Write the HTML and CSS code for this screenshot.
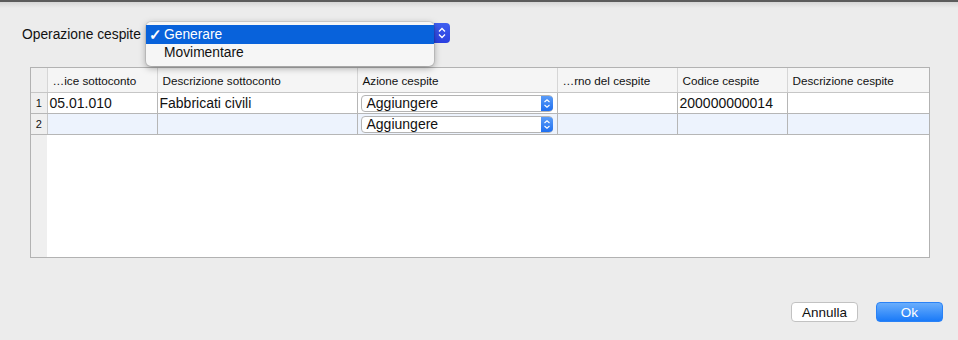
FILE: index.html
```html
<!DOCTYPE html>
<html lang="it">
  <head>
    <meta charset="UTF-8" />
    <meta name="viewport" content="width=device-width, initial-scale=1.0" />
    <title>Operazione cespite</title>
    <link rel="stylesheet" href="styles.css">
  </head>
  <body>
    <div class="topEdge"></div>
    <div class="dialog">
      <div class="fieldRow">
        <label class="fieldLabel">Operazione cespite</label>
        <div class="popupWrap">
          <div class="popupButton">
            <span class="stepper big">
              <svg width="16" height="20" viewBox="0 0 16 20"><path d="M5 8.5 L8 5.5 L11 8.5 M5 11.5 L8 14.5 L11 11.5" fill="none" stroke="#fff" stroke-width="1.3"/></svg>
            </span>
          </div>
          <ul class="popupMenu">
            <li class="selected"><span class="check">✓</span>Generare</li>
            <li>Movimentare</li>
          </ul>
        </div>
      </div>

      <div class="grid">
        <table class="gridTable">
          <colgroup>
            <col class="colNum">
            <col class="colA">
            <col class="colB">
            <col class="colC">
            <col class="colD">
            <col class="colE">
            <col>
          </colgroup>
          <thead>
            <tr>
              <th class="num"></th>
              <th>…ice sottoconto</th>
              <th>Descrizione sottoconto</th>
              <th>Azione cespite</th>
              <th>…rno del cespite</th>
              <th>Codice cespite</th>
              <th>Descrizione cespite</th>
            </tr>
          </thead>
          <tbody>
            <tr>
              <td class="num">1</td>
              <td>05.01.010</td>
              <td>Fabbricati civili</td>
              <td class="selectCell">
                <div class="cellSelect">Aggiungere
                  <span class="stepper">
                    <svg width="12" height="15" viewBox="0 0 12 15"><path d="M3.5 6 L6 3.8 L8.5 6 M3.5 9 L6 11.2 L8.5 9" fill="none" stroke="#fff" stroke-width="1.1"/></svg>
                  </span>
                </div>
              </td>
              <td></td>
              <td>200000000014</td>
              <td></td>
            </tr>
            <tr class="alt">
              <td class="num">2</td>
              <td></td>
              <td></td>
              <td class="selectCell">
                <div class="cellSelect">Aggiungere
                  <span class="stepper">
                    <svg width="12" height="15" viewBox="0 0 12 15"><path d="M3.5 6 L6 3.8 L8.5 6 M3.5 9 L6 11.2 L8.5 9" fill="none" stroke="#fff" stroke-width="1.1"/></svg>
                  </span>
                </div>
              </td>
              <td></td>
              <td></td>
              <td></td>
            </tr>
          </tbody>
        </table>
      </div>

      <div class="buttons">
        <button class="btn">Annulla</button>
        <button class="btn primary">Ok</button>
      </div>
    </div>
  </body>
</html>
```

FILE: styles.css
```css
body {
  margin: 0;
  background: #ececec;
  font-family: "Liberation Sans", Arial, sans-serif;
  color: #111;
  overflow: hidden;
}
.topEdge {
  height: 6px;
  border-top: 2px solid #5c5c5c;
  background: linear-gradient(#d6d6d6, #ececec);
}
.dialog {
  padding: 0 15px 0 22px;
}
.fieldRow {
  display: flex;
  align-items: center;
  margin-top: 15px;
  height: 20px;
}
.fieldLabel {
  font-size: 13.8px;
  width: 124px;
  padding-top: 2px;
}
.popupWrap {
  position: relative;
  width: 304px;
  height: 20px;
}
.popupButton {
  height: 20px;
  display: flex;
  justify-content: flex-end;
}
.stepper {
  display: flex;
  align-items: center;
  justify-content: center;
  background: linear-gradient(#5a9cf8, #1f6ff0);
  border-radius: 0 4px 4px 0;
}
.stepper.big {
  width: 16px;
  height: 20px;
  background: linear-gradient(#3f5ff0, #2a3fe0);
}
.popupMenu {
  position: absolute;
  left: 0;
  top: -1px;
  width: 288px;
  height: 44px;
  margin: 0;
  padding: 3px 0 0;
  list-style: none;
  background: #f6f6f6;
  border-radius: 5px;
  box-shadow: 0 2px 7px rgba(0, 0, 0, 0.35), 0 0 0 1px rgba(0, 0, 0, 0.08);
  font-size: 13.8px;
  box-sizing: border-box;
}
.popupMenu li {
  height: 18px;
  line-height: 18px;
  padding-left: 18px;
  position: relative;
}
.popupMenu li.selected {
  background: #0862db;
  color: #fff;
  height: 19px;
  line-height: 20px;
}
.check {
  position: absolute;
  left: 3px;
  font-size: 15px;
  font-weight: bold;
}
.grid {
  margin: 24px 0 0 8px;
  width: 898px;
  height: 189px;
  border: 1px solid #b2b2b2;
  background: linear-gradient(to right, #efefef 16px, #fff 16px);
}
.gridTable {
  border-collapse: collapse;
  table-layout: fixed;
  width: 898px;
  font-size: 14px;
}
.colNum { width: 16px; }
.colA { width: 110px; }
.colB { width: 200px; }
.colC { width: 200px; }
.colD { width: 120px; }
.colE { width: 110px; }
.gridTable th {
  height: 24px;
  background: #f5f5f5;
  font-weight: normal;
  font-size: 11.7px;
  text-align: left;
  padding: 0 0 0 5px;
  border-right: 1px solid #d6d6d6;
  border-bottom: 1px solid #c6c6c6;
  white-space: nowrap;
  overflow: hidden;
}
.gridTable th:last-child {
  border-right: none;
}
.gridTable th.num {
  background: #efefef;
}
.gridTable td {
  line-height: 20px;
  padding: 0 0 0 2px;
  background: #fff;
  border-right: 1px solid #b6b6b6;
  border-bottom: 1px solid #b6b6b6;
  white-space: nowrap;
  overflow: hidden;
}
.gridTable td:last-child {
  border-right: none;
}
.gridTable tr.alt td {
  background: #edf3fd;
}
.gridTable td.num,
.gridTable tr.alt td.num {
  background: #efefef;
  font-size: 11px;
  text-align: center;
  padding: 0;
  border-right: 1px solid #c8c8c8;
}
.gridTable td.selectCell {
  padding: 0 4px 0 3px;
}
.cellSelect {
  display: flex;
  justify-content: space-between;
  align-items: center;
  height: 15px;
  padding-left: 5px;
  background: #fff;
  border: 1px solid #b4b4b4;
  border-radius: 4px;
  line-height: 15px;
}
.cellSelect .stepper {
  width: 12px;
  height: 15px;
  margin-right: -1px;
}
.buttons {
  display: flex;
  justify-content: flex-end;
  gap: 18px;
  margin-top: 44px;
}
.btn {
  width: 67px;
  height: 20px;
  font-family: "Liberation Sans", Arial, sans-serif;
  font-size: 13.5px;
  border-radius: 4px;
  border: 1px solid #c2c2c2;
  background: #fff;
  color: #111;
  padding: 0;
}
.btn.primary {
  border-color: #2a82f6;
  background: linear-gradient(#6aaefc, #1a7af8);
  color: #fff;
}
```
